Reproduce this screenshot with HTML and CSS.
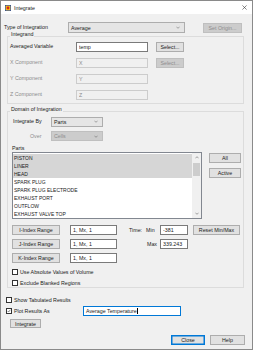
FILE: index.html
```html
<!DOCTYPE html>
<html lang="en">
  <head>
    <meta charset="UTF-8" />
    <meta name="viewport" content="width=device-width, initial-scale=1.0" />
    <title>Integrate</title>
    <link rel="stylesheet" href="styles.css">
  </head>
  <body>
    <div class="dialog">
      <div class="dialog__title">
        <svg class="dialog__icon" viewBox="0 0 6 6">
          <rect x="0.3" y="0.3" width="5.4" height="5.4" fill="#f3c318" stroke="#1d3f8c" stroke-width="0.6" />
          <circle cx="3" cy="3" r="1.4" fill="#d8261c" />
        </svg>
        <span class="dialog__caption">Integrate</span>
        <svg class="dialog__close" viewBox="0 0 6 6">
          <path d="M0.5 0.5l5 5M5.5 0.5l-5 5" />
        </svg>
      </div>

      <div class="dialog__body">
        <div class="row row_type">
          <span class="label label_type">Type of Integration</span>
          <div class="combo combo_type">
            <span>Average</span>
            <svg class="combo__arrow" viewBox="0 0 5 3"><polyline points="0.5,0.5 2.5,2.5 4.5,0.5" /></svg>
          </div>
          <button class="btn btn_origin" type="button" disabled>Set Origin...</button>
        </div>

        <fieldset class="group group_integrand">
          <legend class="group__title">Integrand</legend>
          <div class="field">
            <span class="label label_var">Averaged Variable</span>
            <input class="text text_var" type="text" value="temp">
            <button class="btn btn_select" type="button">Select...</button>
          </div>
          <div class="field">
            <span class="label label_var label_off">X Component</span>
            <input class="text text_var" type="text" value="X" disabled>
            <button class="btn btn_select" type="button" disabled>Select...</button>
          </div>
          <div class="field">
            <span class="label label_var label_off">Y Component</span>
            <input class="text text_var" type="text" value="Y" disabled>
          </div>
          <div class="field">
            <span class="label label_var label_off">Z Component</span>
            <input class="text text_var" type="text" value="Z" disabled>
          </div>
        </fieldset>

        <fieldset class="group group_domain">
          <legend class="group__title">Domain of Integration</legend>
          <div class="domain">
            <div class="field">
              <span class="label label_by">Integrate By</span>
              <div class="combo combo_small">
                <span>Parts</span>
                <svg class="combo__arrow" viewBox="0 0 5 3"><polyline points="0.5,0.5 2.5,2.5 4.5,0.5" /></svg>
              </div>
            </div>
            <div class="field field_over">
              <span class="label label_by label_over label_off">Over</span>
              <div class="combo combo_small combo_off">
                <span>Cells</span>
                <svg class="combo__arrow" viewBox="0 0 5 3"><polyline points="0.5,0.5 2.5,2.5 4.5,0.5" /></svg>
              </div>
            </div>

            <div class="parts-label">Parts</div>
            <div class="parts">
              <div class="list">
                <ul class="list__items">
                  <li class="list__item list__item_sel">PISTON</li>
                  <li class="list__item list__item_sel">LINER</li>
                  <li class="list__item list__item_sel">HEAD</li>
                  <li class="list__item">SPARK PLUG</li>
                  <li class="list__item">SPARK PLUG ELECTRODE</li>
                  <li class="list__item">EXHAUST PORT</li>
                  <li class="list__item">OUTFLOW</li>
                  <li class="list__item">EXHAUST VALVE TOP</li>
                </ul>
                <div class="scroll">
                  <svg class="scroll__arrow" viewBox="0 0 5 3"><polyline points="0.5,2.5 2.5,0.5 4.5,2.5" /></svg>
                  <div class="scroll__track"><div class="scroll__thumb"></div></div>
                  <svg class="scroll__arrow" viewBox="0 0 5 3"><polyline points="0.5,0.5 2.5,2.5 4.5,0.5" /></svg>
                </div>
              </div>
              <div class="parts__side">
                <button class="btn btn_side" type="button">All</button>
                <button class="btn btn_side btn_active" type="button">Active</button>
              </div>
            </div>

            <div class="index index_i">
              <button class="btn btn_index" type="button">I-Index Range</button>
              <input class="text text_index" type="text" value="1, Mx, 1">
              <span class="time"><span class="time__word">Time:</span>Min</span>
              <input class="text text_time" type="text" value="-381">
              <button class="btn btn_reset" type="button">Reset Min/Max</button>
            </div>
            <div class="index index_j">
              <button class="btn btn_index" type="button">J-Index Range</button>
              <input class="text text_index" type="text" value="1, Mx, 1">
              <span class="time time_max">Max</span>
              <input class="text text_time" type="text" value="339.243">
            </div>
            <div class="index index_k">
              <button class="btn btn_index" type="button">K-Index Range</button>
              <input class="text text_index" type="text" value="1, Mx, 1">
            </div>

            <label class="check check_abs"><span class="check__box"></span>Use Absolute Values of Volume</label>
            <label class="check check_excl"><span class="check__box"></span>Exclude Blanked Regions</label>
          </div>
        </fieldset>

        <label class="check check_tab"><span class="check__box"></span>Show Tabulated Results</label>
        <div class="plot">
          <label class="check check_plot">
            <span class="check__box">
              <svg class="check__mark" viewBox="0 0 6 6"><polyline points="1,3 2.4,4.5 5,1.2" /></svg>
            </span>Plot Results As
          </label>
          <div class="text text_plot">Average Temperature<span class="caret"></span></div>
        </div>
        <button class="btn btn_integrate" type="button">Integrate</button>

        <div class="footer">
          <button class="btn btn_footer btn_default" type="button">Close</button>
          <button class="btn btn_footer" type="button">Help</button>
        </div>
      </div>
    </div>
  </body>
</html>
```

FILE: styles.css
```css
* {
  box-sizing: border-box;
}

body {
  margin: 0;
  background: #fff;
  color: #1a1a1a;
  font: 5.3px "Liberation Sans", Arial, sans-serif;
}

.dialog {
  width: 253px;
  height: 350px;
  border: 1px solid #8a8a8a;
  background: #f0f0f0;
  display: flex;
  flex-direction: column;
}

/* title bar */
.dialog__title {
  height: 13px;
  flex: none;
  background: #fff;
  display: flex;
  align-items: center;
  padding: 0 5px 0 4px;
}
.dialog__icon {
  width: 6px;
  height: 6px;
}
.dialog__caption {
  margin-left: 3px;
  flex: 1;
}
.dialog__close {
  width: 5px;
  height: 5px;
  fill: none;
  stroke: #333;
  stroke-width: 0.7;
}

.dialog__body {
  flex: 1;
  padding: 0 7px 0 3px;
}

/* common controls */
.label {
  line-height: 7px;
  white-space: nowrap;
}
.label_off {
  color: #8c8c8c;
}

.btn {
  font: inherit;
  color: inherit;
  padding: 0;
  height: 10px;
  line-height: 8px;
  background: #e1e1e1;
  border: 1px solid #adadad;
  border-radius: 0;
  white-space: nowrap;
}
.btn:disabled {
  background: #cccccc;
  border-color: #bfbfbf;
  color: #8d8d8d;
}

.text {
  font: inherit;
  color: inherit;
  height: 10px;
  padding: 0 2px;
  line-height: 8px;
  background: #fff;
  border: 1px solid #7a7a7a;
  border-radius: 0;
  outline: none;
}
.text:disabled {
  background: #f0f0f0;
  border-color: #cccccc;
  color: #8c8c8c;
}

.combo {
  display: flex;
  align-items: center;
  justify-content: space-between;
  padding: 0 4px 0 2px;
  background: #e5e5e5;
  border: 1px solid #adadad;
}
.combo_off {
  background: #cccccc;
  border-color: #bfbfbf;
  color: #8d8d8d;
}
.combo__arrow {
  width: 4px;
  height: 3px;
  fill: none;
  stroke: #555;
  stroke-width: 0.6;
}

/* first row */
.row_type {
  display: flex;
  align-items: center;
  margin-top: 8px;
  height: 11px;
}
.label_type {
  width: 64px;
  padding-left: 0;
}
.combo_type {
  width: 117px;
  height: 11px;
}
.btn_origin {
  width: 39px;
  margin-left: 18px;
}

/* groups */
.group {
  margin: 0 0 0 3px;
  width: 237px;
  min-width: 0;
  border: 1px solid #dcdcdc;
  padding: 0 2px 3px;
}
.group__title {
  padding: 0 1px 4px;
  line-height: 7px;
}
.group_integrand {
  margin-top: -2.5px;
}
.group_domain {
  margin-top: 2px;
  padding-bottom: 0;
}

.field {
  display: flex;
  align-items: center;
  height: 10px;
}
.field + .field {
  margin-top: 6px;
}
.label_var {
  width: 66px;
}
.text_var {
  width: 72px;
}
.btn_select {
  width: 28px;
  margin-left: 8px;
}

/* domain */
.domain {
  padding-left: 2px;
}
.label_by {
  width: 39px;
  padding-left: 1px;
}
.label_over {
  padding-left: 18px;
}
.field_over {
  margin-top: 4.5px !important;
}
.combo_small {
  width: 52px;
  height: 10px;
}

.parts-label {
  margin-top: 3.5px;
  line-height: 7px;
}
.parts {
  display: flex;
  margin-top: 0.5px;
}
.list {
  width: 190px;
  height: 67px;
  background: #fff;
  border: 1px solid #828790;
  display: flex;
}
.list__items {
  flex: 1;
  margin: 0;
  padding: 1px 0 0;
  list-style: none;
}
.list__item {
  height: 8px;
  line-height: 8px;
  padding-left: 1px;
  font-size: 5px;
}
.list__item_sel {
  background: #d6d6d6;
}
.scroll {
  width: 9px;
  display: flex;
  flex-direction: column;
  align-items: center;
  background: #f0f0f0;
}
.scroll__arrow {
  width: 4px;
  height: 3px;
  margin: 3px 0;
  fill: none;
  stroke: #606060;
  stroke-width: 0.7;
}
.scroll__track {
  flex: 1;
  width: 100%;
  padding: 1px 1px 0;
}
.scroll__thumb {
  height: 13px;
  background: #cdcdcd;
}
.parts__side {
  display: flex;
  flex-direction: column;
  margin-left: 7px;
}
.btn_side {
  width: 32px;
  margin-top: 1px;
}
.btn_active {
  margin-top: 5px;
}

.index {
  display: flex;
  align-items: center;
  height: 10px;
}
.index_i {
  margin-top: 6px;
}
.index_j {
  margin-top: 4px;
}
.index_k {
  margin-top: 3.5px;
}
.btn_index {
  width: 48px;
}
.text_index {
  width: 47px;
  margin-left: 10px;
}
.time {
  width: 43px;
  padding-left: 12px;
  white-space: nowrap;
}
.time__word {
  margin-right: 4px;
}
.time_max {
  padding-left: 30px;
}
.text_time {
  width: 28px;
}
.btn_reset {
  width: 47px;
  margin-left: 5px;
}

/* checkboxes */
.check {
  display: flex;
  align-items: center;
  height: 7px;
  white-space: nowrap;
}
.check__box {
  width: 6px;
  height: 6px;
  margin-right: 2px;
  background: #fff;
  border: 1px solid #333;
  display: flex;
}
.check__mark {
  width: 100%;
  height: 100%;
  fill: none;
  stroke: #222;
  stroke-width: 0.8;
}
.check_abs {
  margin-top: 6px;
}
.check_excl {
  margin-top: 4px;
}
.check_tab {
  margin: 9px 0 0 2px;
}

.plot {
  display: flex;
  align-items: center;
  height: 10px;
  margin: 2.5px 0 0 2px;
}
.check_plot {
  width: 77px;
}
.text_plot {
  width: 98px;
  display: flex;
  align-items: center;
  border-color: #0078d7;
}
.caret {
  width: 0.6px;
  height: 6px;
  margin-left: 0.5px;
  background: #000;
}
.btn_integrate {
  display: block;
  width: 31px;
  height: 9px;
  margin: 3px 0 0 6px;
}

.footer {
  display: flex;
  justify-content: flex-end;
  gap: 5px;
  margin-top: 7px;
}
.btn_footer {
  width: 35px;
}
.btn_default {
  width: 34px;
  border-color: #0078d7;
  box-shadow: inset 0 0 0 0.5px #0078d7;
}
```
